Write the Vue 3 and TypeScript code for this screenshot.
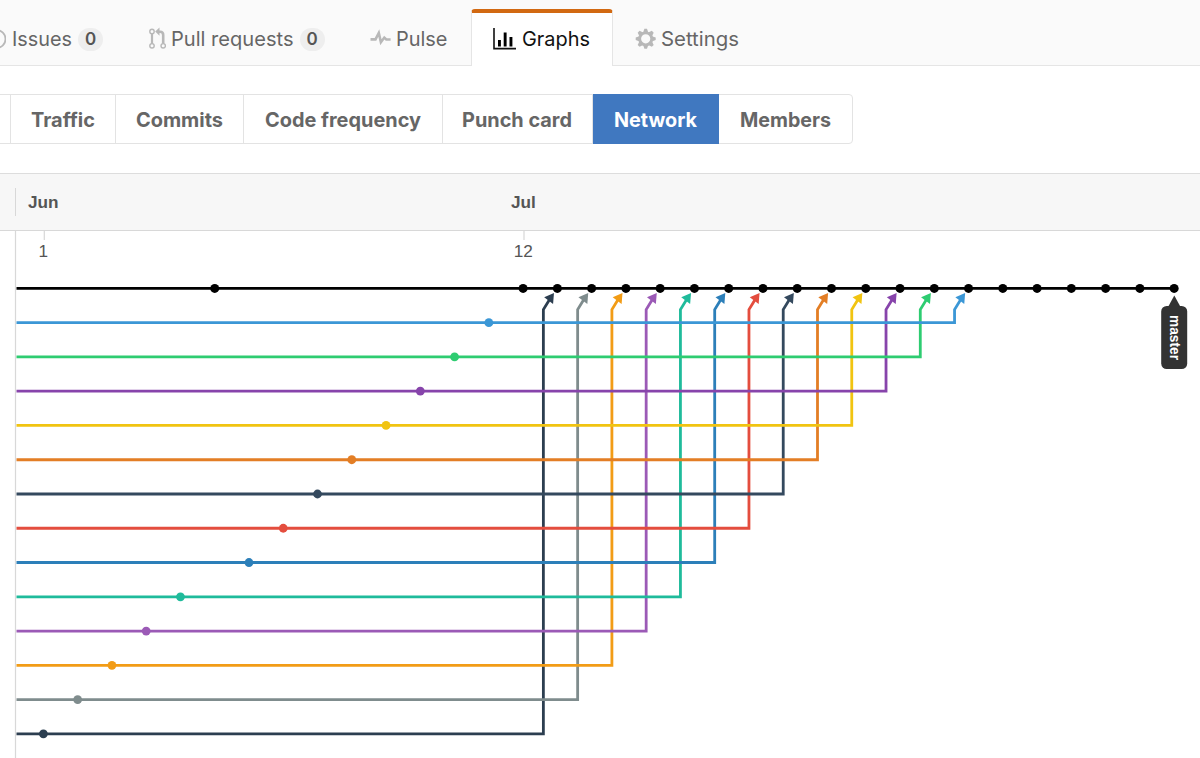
<script setup lang="ts">
interface Tab { label: string; icon: string; textWidth: number; count?: number; active?: boolean }
interface Branch { color: string; commit: number }

const tabs: Tab[] = [
  { label: 'Issues', icon: 'issue', textWidth: 60, count: 0 },
  { label: 'Pull requests', icon: 'pull', textWidth: 122.5, count: 0 },
  { label: 'Pulse', icon: 'pulse', textWidth: 51.5 },
  { label: 'Graphs', icon: 'graph', textWidth: 68, active: true },
  { label: 'Settings', icon: 'gear', textWidth: 78 },
]

const sections = [
  { label: 'Traffic', width: 106, text: 64 },
  { label: 'Commits', width: 128.5, text: 87 },
  { label: 'Code frequency', width: 198.5, text: 156 },
  { label: 'Punch card', width: 150, text: 110 },
  { label: 'Network', width: 126, text: 83, active: true },
  { label: 'Members', width: 133, text: 91 },
]

// Listed from the row nearest master down to the lowest row.
const branches: Branch[] = [
  { color: '#3b97d6', commit: 13 },
  { color: '#2ecc71', commit: 12 },
  { color: '#8744ab', commit: 11 },
  { color: '#f1c411', commit: 10 },
  { color: '#e37e25', commit: 9 },
  { color: '#34495e', commit: 8 },
  { color: '#e44d3e', commit: 7 },
  { color: '#2c7fb9', commit: 6 },
  { color: '#1fbb9b', commit: 4 },
  { color: '#9b5ab6', commit: 3 },
  { color: '#f29c16', commit: 2 },
  { color: '#7f8c8d', commit: 1 },
  { color: '#2c3e50', commit: 0 },
]

const step = 34.265
const x = (i: number) => 43.4 + i * step
const y = (row: number) => 288.4 + row * step - 231
const masterCommits = [5, ...Array.from({ length: 20 }, (_, i) => i + 14)]

const rows = branches.map((b, i) => {
  const target = x(27 - i)
  const row = y(i + 1)
  return {
    ...b,
    row,
    cx: x(b.commit),
    path: `M16.5 ${row}H${target - 14}V78.6L${target - 7.5} 68`,
    arrow: `M${target - 3.4} 61.9L${target - 13.2} 66.3L${target - 4.3} 73Z`,
  }
}).reverse()
</script>

<template>
  <main class="page">
    <nav class="tabs">
      <a v-for="t in tabs" :key="t.label" class="tab" :class="[t.icon, { active: t.active }]">
        <svg v-if="t.icon === 'issue'" class="icon" width="21" height="24" viewBox="0 0 21 24">
          <circle cx="11.5" cy="12" r="9" fill="none" stroke="#b8b8b8" stroke-width="1.8" />
          <path d="M11.5 7v6M11.5 15v2" stroke="#b8b8b8" stroke-width="2" />
        </svg>
        <svg v-else-if="t.icon === 'pull'" class="icon" width="18" height="24" viewBox="0 0 18 24">
          <g fill="none" stroke="#b8b8b8">
            <circle cx="4" cy="4.4" r="2.2" stroke-width="1.4" />
            <circle cx="4" cy="18.8" r="2.2" stroke-width="1.4" />
            <circle cx="15.2" cy="18.8" r="2.2" stroke-width="1.4" />
            <path d="M4 6.5v10.2" stroke-width="2.2" />
            <path d="M10 4.7h2.2q3 0 3 3.2v8.7" stroke-width="2.6" />
          </g>
          <path d="M11.5 .5v8.2L7.2 4.6z" fill="#b8b8b8" />
        </svg>
        <svg v-else-if="t.icon === 'pulse'" class="icon" width="21" height="24" viewBox="0 0 21 24">
          <path d="M.5 12.4h5L8.8 6l2.1 9.2 3.4-4.6 2 1.9h4.3" fill="none" stroke="#b8b8b8" stroke-width="2.6" />
        </svg>
        <svg v-else-if="t.icon === 'graph'" class="icon" width="24" height="24" viewBox="0 0 24 24">
          <path d="M1 0v20.6h22" fill="none" stroke="#111" stroke-width="1.6" />
          <path d="M5 12h2.9v6.4H5zM10.7 4.4h2.9v14h-2.9zM16.5 9h2.9v9.4h-2.9z" />
        </svg>
        <svg v-else class="icon" width="21" height="24" viewBox="0 0 21 24">
          <g fill="#b8b8b8" transform="translate(10.7 11.8)">
            <path v-for="a in 8" :key="a" d="M-2.6-6.2L-1.3-10h2.6L2.6-6.2z" :transform="`rotate(${a * 45})`" />
            <circle r="6" fill="none" stroke="#b8b8b8" stroke-width="2.8" />
          </g>
        </svg>
        <svg class="label" :width="t.textWidth" height="28">
          <text x="0" :y="t.active ? 20 : 20.8" :textLength="t.textWidth" lengthAdjust="spacingAndGlyphs">{{ t.label }}</text>
        </svg>
        <span v-if="t.count !== undefined" class="count">{{ t.count }}</span>
      </a>
    </nav>

    <nav class="sections">
      <a v-for="s in sections" :key="s.label" class="section" :class="{ selected: s.active }" :style="{ width: `${s.width}px` }">
        <svg class="label" :width="s.text" height="28">
          <text x="0" y="21.7" :textLength="s.text" lengthAdjust="spacingAndGlyphs">{{ s.label }}</text>
        </svg>
      </a>
    </nav>

    <header class="months">
      <span class="month june">Jun</span>
      <span class="month">Jul</span>
    </header>

    <svg class="network" width="1200" height="527" viewBox="0 0 1200 527">
      <path d="M15.5 0V527M44.3 0V9M524 0V9" stroke="#d8d8d8" stroke-width="1.2" />
      <g class="days">
        <text x="43.3" y="25.8">1</text>
        <text x="523.3" y="25.8">12</text>
      </g>
      <g v-for="r in rows" :key="r.row">
        <path :d="r.path" fill="none" :stroke="r.color" stroke-width="2.8" />
        <path :d="r.arrow" :fill="r.color" />
        <circle :cx="r.cx" :cy="r.row" r="4.4" :fill="r.color" />
      </g>
      <path :d="`M16.5 ${y(0)}H${x(33)}`" stroke="#000" stroke-width="2.8" />
      <circle v-for="c in masterCommits" :key="c" :cx="x(c)" :cy="y(0)" r="4.5" />
      <path d="M1174.3 64.5L1180.3 75.5H1168.3Z" fill="#333" />
      <rect x="1161.2" y="75" width="26" height="63" rx="5.5" fill="#333" />
      <text class="ref" transform="translate(1169.6 84) rotate(90)" textLength="45" lengthAdjust="spacingAndGlyphs">master</text>
    </svg>
  </main>
</template>

<style>
body { margin: 0; overflow: hidden; background: #fff; }
</style>

<style scoped>
.page { width: 1200px; height: 758px; overflow: hidden; background: #fff; font-family: Inter, "Liberation Sans", sans-serif; color: #666; }
svg { display: block; flex: none; }
.tabs { height: 66px; box-sizing: border-box; display: flex; align-items: flex-end; background: #fafafa; border-bottom: 1px solid #e5e5e5; }
.tab { display: flex; align-items: center; height: 57px; box-sizing: border-box; flex: none; padding-top: 4px; }
.tab.issue { margin-left: -15px; width: 163px; }
.tab.pull { width: 222px; }
.tab.pulse { width: 101px; }
.tab.graph { width: 142px; padding-left: 21px; }
.tab.gear { padding-left: 22px; }
.tab.active { color: #111; background: #fff; border: 1px solid #e5e5e5; border-top: 4px solid #d26911; border-bottom: 0; border-radius: 4px 4px 0 0; margin-bottom: -1px; padding-top: 0; height: 57px; }
.tab .label { margin-left: 5px; fill: currentColor; font-size: 20px; overflow: visible; }
.tab.issue .label { margin-left: 6px; }
.count { margin: 2px 0 0 6px; width: 25px; height: 23px; border-radius: 12px; background: #eee; color: #555; font-size: 17px; font-weight: 600; line-height: 23px; text-align: center; }
.tab.pull .count { margin-left: 6px; }
.sections { margin: 28px 0 29px -12px; padding-left: 20.5px; display: flex; height: 50px; box-sizing: border-box; border: 1px solid #e3e3e3; border-radius: 4px; width: 865px; }
.section { flex: none; box-sizing: border-box; display: flex; align-items: center; justify-content: center; border-right: 1px solid #e3e3e3; }
.section:first-child { border-left: 1px solid #e3e3e3; }
.section:last-child { border-right: 0; }
.section .label { fill: currentColor; font-size: 20px; font-weight: 700; overflow: visible; }
.section.selected { background: #4078c0; color: #fff; margin: -1px 0; border: 0; }
.months { height: 58px; box-sizing: border-box; display: flex; align-items: center; padding-left: 15px; background: #f7f7f7; border-top: 1px solid #ddd; border-bottom: 1.5px solid #d8d8d8; font: 700 17.2px "Liberation Sans", sans-serif; color: #555; }
.month { line-height: 28px; }
.june { width: 483px; padding-left: 12px; border-left: 1px solid #d8d8d8; box-sizing: border-box; margin-right: 13px; }
.days { font: 17.2px "Liberation Sans", sans-serif; fill: #555; text-anchor: middle; }
.ref { font: 700 14px "Liberation Sans", sans-serif; fill: #fff; }
</style>
